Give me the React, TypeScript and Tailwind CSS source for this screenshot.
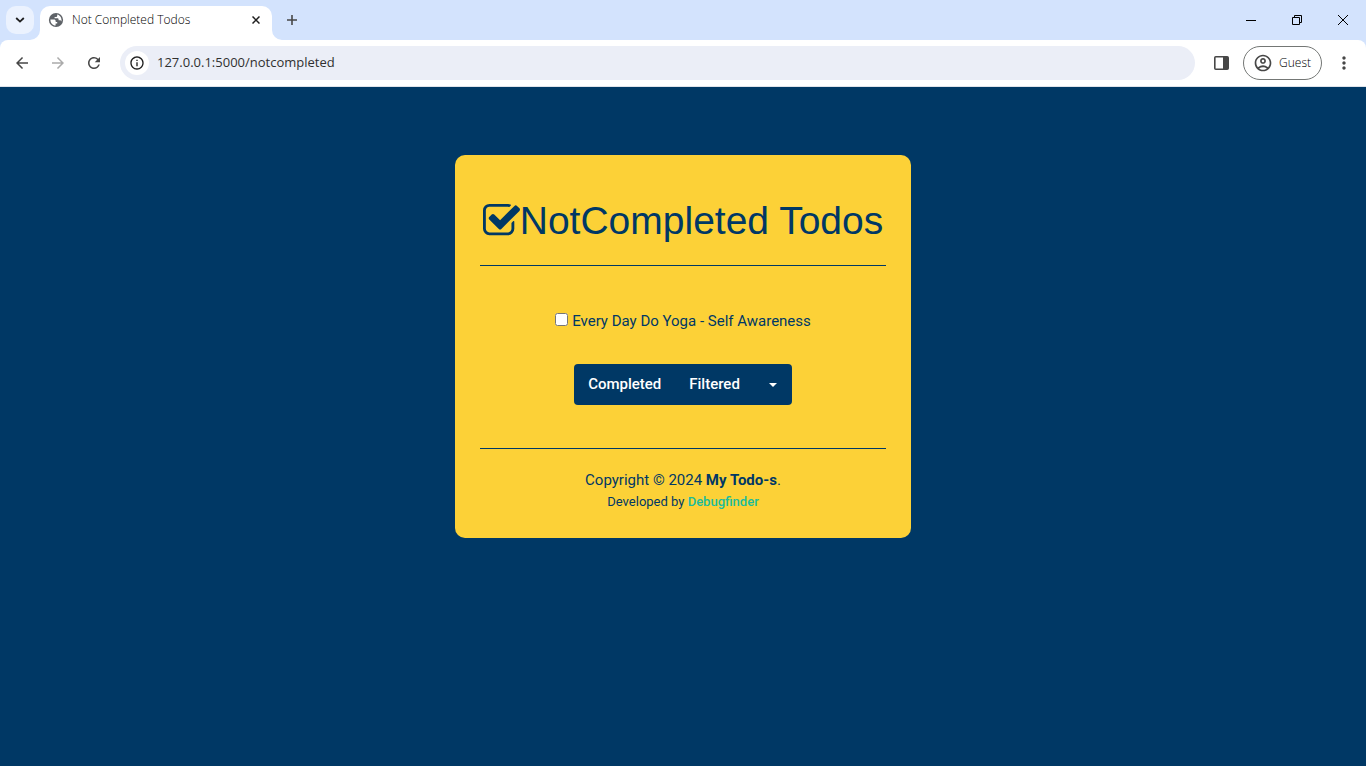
import { useState } from "react";
import {
  MdArrowBack,
  MdArrowForward,
  MdInfoOutline,
  MdMoreVert,
  MdOutlineAccountCircle,
  MdRefresh,
} from "react-icons/md";

function CheckSquareIcon() {
  return (
    <svg viewBox="64 0 1664 1792" className="h-10 w-[37px] shrink-0" fill="currentColor" aria-hidden="true">
      <path d="M1472 930v318q0 119-84.5 203.5t-203.5 84.5h-832q-119 0-203.5-84.5t-84.5-203.5v-832q0-119 84.5-203.5t203.5-84.5h832q63 0 117 25 15 7 18 23 3 17-9 29l-49 49q-10 10-23 10-3 0-9-2-23-6-45-6h-832q-66 0-113 47t-47 113v832q0 66 47 113t113 47h832q66 0 113-47t47-113v-254q0-13 9-22l64-64q10-10 23-10 6 0 12 3 20 8 20 29zm231-489l-814 814q-24 24-57 24t-57-24l-430-430q-24-24-24-57t24-57l110-110q24-24 57-24t57 24l263 263 647-647q24-24 57-24t57 24l110 110q24 24 24 57t-24 57z" />
    </svg>
  );
}

function GlobeIcon() {
  return (
    <svg viewBox="0 0 16 16" className="size-4" aria-hidden="true">
      <circle cx="8" cy="8" r="7.1" fill="#5f6368" />
      <path
        d="M2.4 7.6h3.4c1.2 0 1.9 0.7 1.9 1.7v0.6h1.5v1.5H7.6v2.2c-3 0-5.2-2.5-5.2-6zM9.2 2.5v1.2c0 0.8-0.6 1.3-1.4 1.3H6.6v1.3h2.8c0.7 0 1.2 0.5 1.2 1.2v0.8h1.2c0.8 0 1.3 0.5 1.7 1.2C14 6.3 12.4 3.2 9.2 2.5z"
        fill="#fff"
      />
    </svg>
  );
}

function TabStrip() {
  return (
    <div className="flex h-10 items-start bg-[#d3e3fd]">
      <button aria-label="Search tabs" className="mt-[6px] ml-[6px] flex size-7 items-center justify-center rounded-[10px] bg-[#ebf2fe]">
        <svg width="10" height="6" viewBox="0 0 10 6" fill="none" stroke="#1f1f1f" strokeWidth="1.8">
          <path d="M1.2 1l3.8 3.6 3.8-3.6" />
        </svg>
      </button>
      <div className="relative mt-[6px] ml-[6px] flex h-[34px] w-[232px] items-center rounded-t-[10px] bg-white pb-[6px] pl-2">
        <svg className="absolute bottom-0 -left-[10px] size-[10px]" viewBox="0 0 10 10" fill="#fff" aria-hidden="true">
          <path d="M10 0v10H0A10 10 0 0 0 10 0z" />
        </svg>
        <svg className="absolute -right-[10px] bottom-0 size-[10px]" viewBox="0 0 10 10" fill="#fff" aria-hidden="true">
          <path d="M0 0v10h10A10 10 0 0 1 0 0z" />
        </svg>
        <GlobeIcon />
        <span className="ml-2 flex-1 text-xs font-light whitespace-nowrap text-black">Not Completed Todos</span>
        <button aria-label="Close tab" className="mr-2 flex size-4 items-center justify-center">
          <svg width="8" height="8" viewBox="0 0 8 8" stroke="#1f1f1f" strokeWidth="1.5">
            <path d="M0.5 0.5l7 7M7.5 0.5l-7 7" />
          </svg>
        </button>
      </div>
      <button aria-label="New tab" className="mt-[6px] ml-[6px] flex size-7 items-center justify-center">
        <svg width="10" height="10" viewBox="0 0 10 10" stroke="#474747" strokeWidth="1.6">
          <path d="M5 0v10M0 5h10" />
        </svg>
      </button>
      <div className="ml-auto flex h-10 items-center text-black">
        <button aria-label="Minimize" className="flex h-10 w-[46px] items-center justify-center">
          <svg width="10" height="10" viewBox="0 0 10 10" fill="currentColor">
            <path d="M0 5h10v1H0z" />
          </svg>
        </button>
        <button aria-label="Restore" className="flex h-10 w-[46px] items-center justify-center">
          <svg width="10" height="10" viewBox="0 0 10 10" fill="none" stroke="currentColor">
            <path d="M0.5 2.5h7v7h-7zM2.5 2.5v-2h7v7h-2" />
          </svg>
        </button>
        <button aria-label="Close" className="flex h-10 w-[46px] items-center justify-center">
          <svg width="10" height="10" viewBox="0 0 10 10" stroke="currentColor">
            <path d="M0 0l10 10M10 0L0 10" />
          </svg>
        </button>
      </div>
    </div>
  );
}

function Toolbar() {
  return (
    <div className="bg-[#d3e3fd]">
      <div className="flex h-[47px] items-center rounded-t-lg border-b border-[#dfe3ea] bg-white text-[#474747]">
        <button aria-label="Back" className="ml-2 flex size-7 items-center justify-center">
          <MdArrowBack className="size-[18px]" />
        </button>
        <button aria-label="Forward" disabled className="ml-2 flex size-7 items-center justify-center text-[#ababab]">
          <MdArrowForward className="size-[18px]" />
        </button>
        <button aria-label="Reload" className="ml-2 flex size-7 items-center justify-center">
          <MdRefresh className="size-[18px]" />
        </button>
        <div className="ml-3 flex h-[34px] flex-1 items-center rounded-full bg-[#ebeef7] pl-[5px]">
          <button aria-label="View site information" className="flex size-6 items-center justify-center rounded-full bg-white text-[#1f1f1f]">
            <MdInfoOutline className="size-4" />
          </button>
          <input
            aria-label="Address"
            defaultValue="127.0.0.1:5000/notcompleted"
            className="ml-2 min-w-0 flex-1 bg-transparent text-[13px] text-[#303030] outline-none"
          />
        </div>
        <button aria-label="Side panel" className="ml-3 flex size-7 items-center justify-center">
          <svg width="15" height="14" viewBox="0 0 15 14">
            <rect x="0.8" y="0.8" width="13.4" height="12.4" rx="1" fill="none" stroke="currentColor" strokeWidth="1.6" />
            <path d="M9 1h5v12H9z" fill="currentColor" />
          </svg>
        </button>
        <button className="ml-2 flex h-[34px] items-center rounded-full border border-[#747775] pr-[10px] pl-[9px] text-xs font-light text-black">
          <MdOutlineAccountCircle className="mr-[6px] size-5 text-[#474747]" />
          Guest
        </button>
        <button aria-label="Menu" className="mr-2 ml-2 flex size-7 items-center justify-center">
          <MdMoreVert className="size-5" />
        </button>
      </div>
    </div>
  );
}

function TodoCard() {
  const [done, setDone] = useState(false);
  return (
    <main className="mx-auto mt-[68px] w-[456px] max-w-full rounded-[10px] bg-[#fcd137] px-[25px] pb-[26px] text-center text-[15px] text-[#003865]">
      <h1 className="flex h-[110px] items-center justify-center pt-[22px] font-['Liberation_Sans',Arial,sans-serif] text-[39px] leading-[48px] whitespace-nowrap">
        <CheckSquareIcon />
        NotCompleted Todos
      </h1>
      <hr className="border-[#003865]" />
      <div className="mt-[43px] flex h-6 items-center justify-center">
        <input id="todo-yoga" type="checkbox" checked={done} onChange={() => setDone(!done)} className="mr-1 mb-1 size-[13px]" />
        <label htmlFor="todo-yoga">Every Day Do Yoga - Self Awareness</label>
      </div>
      <div className="mt-[31px] flex justify-center">
        <div className="flex h-[41px] items-center rounded bg-[#003865] font-medium text-white">
          <button className="h-full px-[14px]">Completed</button>
          <button className="h-full px-[14px]">Filtered</button>
          <button aria-label="More filters" className="flex h-full items-center px-[15px]">
            <svg width="8" height="4" viewBox="0 0 8 4" fill="currentColor">
              <path d="M0 0h8L4 4z" />
            </svg>
          </button>
        </div>
      </div>
      <hr className="mt-[43px] border-[#003865]" />
      <footer className="mt-[19px]">
        <p className="leading-6">
          Copyright © 2024 <strong className="font-bold">My Todo-s</strong>.
        </p>
        <p className="text-[13px] leading-5">
          Developed by <a href="#" className="font-medium text-[#1abc9c]">Debugfinder</a>
        </p>
      </footer>
    </main>
  );
}

export default function App() {
  return (
    <div className="flex min-h-screen flex-col bg-[#003865] font-['Roboto',sans-serif]">
      <header className="font-['Open_Sans',sans-serif]">
        <TabStrip />
        <Toolbar />
      </header>
      <TodoCard />
    </div>
  );
}
